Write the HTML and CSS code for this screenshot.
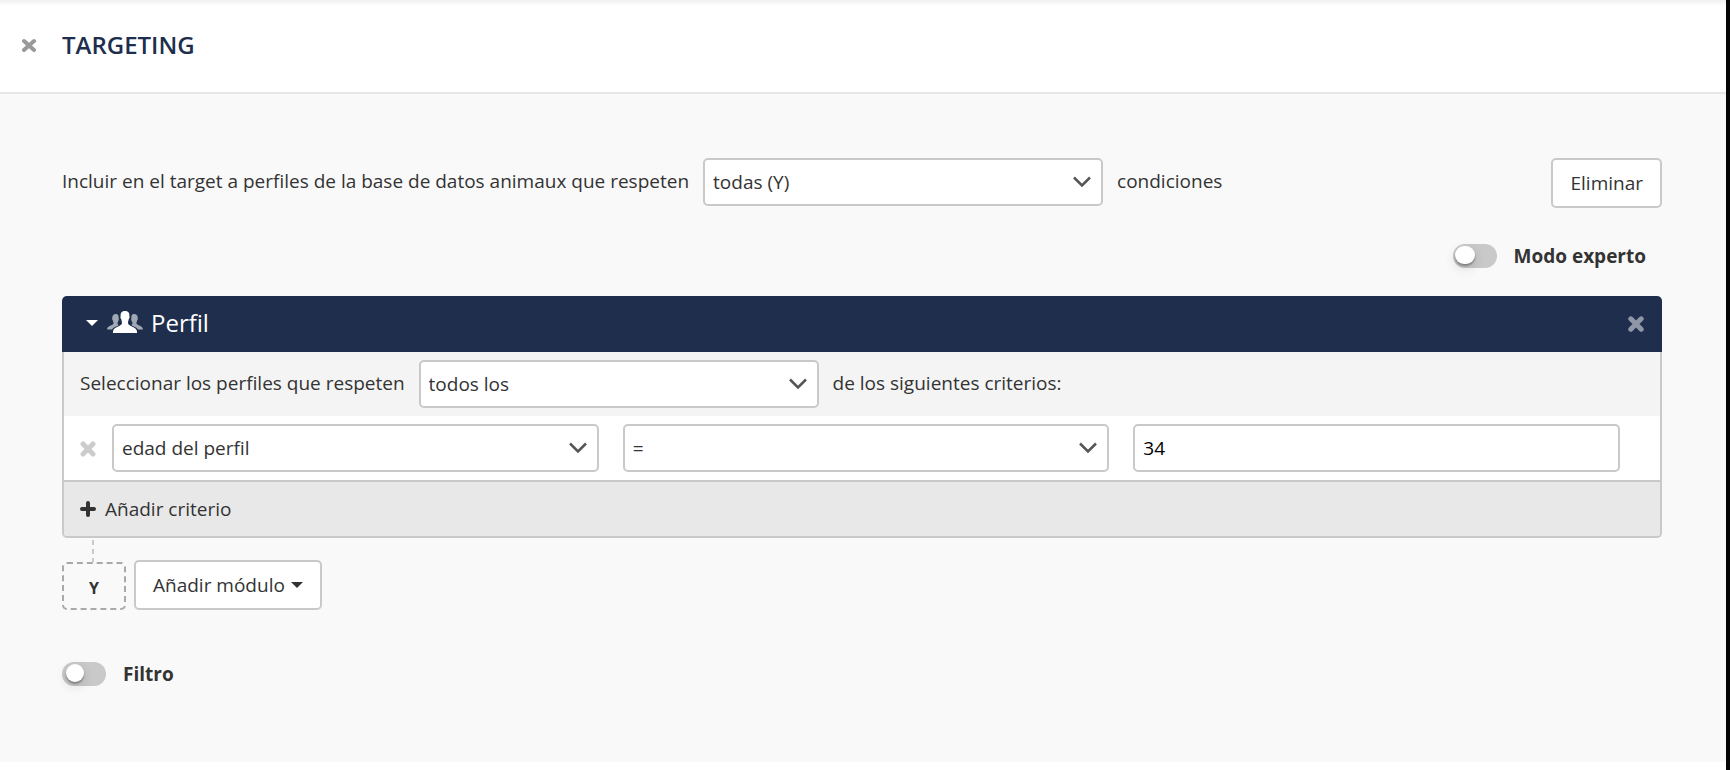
FILE: index.html
```html
<!DOCTYPE html>
<html lang="es">
<head>
<meta charset="utf-8">
<title>Targeting</title>
<link rel="stylesheet" href="styles.css">
</head>
<body>
<div class="page">
  <header class="topbar">
    <button class="icon-button close" type="button" aria-label="Cerrar">
      <svg width="16" height="14" viewBox="0 0 16 14"><path d="M3 3L13 12M13 3L3 12"/></svg>
    </button>
    <h1 class="title">TARGETING</h1>
  </header>
  <main class="content">
    <div class="target-row">
      <div class="sentence">
        <label for="match">Incluir en el target a perfiles de la base de datos animaux que respeten</label>
        <select class="field select-inline" id="match"><option>todas (Y)</option></select>
        <span>condiciones</span>
      </div>
      <button class="button" type="button">Eliminar</button>
    </div>
    <label class="switch expert"><input class="toggle wide" type="checkbox"><span>Modo experto</span></label>

    <section class="panel">
      <div class="panel-head">
        <button class="collapse" type="button" aria-expanded="true">
          <svg class="caret" width="12" height="6" viewBox="0 0 12 6"><path d="M0 0H12L6 6Z"/></svg>
          <svg class="users" width="36" height="24" viewBox="0 0 36 24">
            <g fill="#a0a7b5">
              <path d="M9 3C6.300 3 5.100 4.800 5.300 7C4.900 7.500 5.300 9 5.900 9.500C6.200 11 6.600 11.500 6.600 12.300C6.600 14 1 15 0.200 17.300V18.500H5C6.300 16.200 9.500 15.600 11.600 14.300C10.800 13.400 10.400 12.800 10.500 11.800C11 11 11.300 10.500 11.500 9.500C12 9 11.900 8 11.600 7C11.800 4.800 11.200 3 9 3Z"/>
              <path d="M9 3C6.300 3 5.100 4.800 5.300 7C4.900 7.500 5.300 9 5.900 9.500C6.200 11 6.600 11.500 6.600 12.300C6.600 14 1 15 0.200 17.300V18.500H5C6.300 16.200 9.500 15.600 11.600 14.300C10.800 13.400 10.400 12.800 10.500 11.800C11 11 11.300 10.500 11.500 9.500C12 9 11.900 8 11.600 7C11.800 4.800 11.200 3 9 3Z" transform="translate(36 0) scale(-1 1)"/>
            </g>
            <path d="M18 0C14.500 0 13.300 2.200 13.700 5C13 5.600 13.600 7.700 14.300 8.300C14.600 10 15 10.800 15 12C15 15.500 6.500 15.500 6 20.500V22H30V20.500C29.500 15.500 21 15.500 21 12C21 10.800 21.400 10 21.700 8.300C22.400 7.700 23 5.600 22.300 5C22.700 2.200 21.500 0 18 0Z" fill="#fff"/>
          </svg>
          <span>Perfil</span>
        </button>
        <button class="icon-button remove-module" type="button" aria-label="Eliminar módulo">
          <svg width="16" height="16" viewBox="0 0 16 16"><path d="M2.800 2.800L13.200 13.200M13.200 2.800L2.800 13.200"/></svg>
        </button>
      </div>
      <div class="panel-row sentence">
        <label for="criteria">Seleccionar los perfiles que respeten</label>
        <select class="field select-inline" id="criteria"><option>todos los</option></select>
        <span>de los siguientes criterios:</span>
      </div>
      <div class="panel-row criterion">
        <button class="icon-button remove-criterion" type="button" aria-label="Eliminar criterio">
          <svg width="16" height="16" viewBox="0 0 16 16"><path d="M3 3L13 13M13 3L3 13"/></svg>
        </button>
        <select class="field" aria-label="Campo"><option>edad del perfil</option></select>
        <select class="field" aria-label="Operador"><option>=</option></select>
        <input class="field" type="text" value="34" aria-label="Valor">
      </div>
      <button class="add-criterion" type="button">
        <svg width="16" height="16" viewBox="0 0 16 16"><path d="M8 2V14M2 8H14"/></svg>
        <span>Añadir criterio</span>
      </button>
    </section>

    <div class="connector"></div>
    <div class="module-row">
      <div class="operator">Y</div>
      <button class="button" type="button">Añadir módulo
        <svg width="12" height="6" viewBox="0 0 12 6" fill="#333"><path d="M0 0H12L6 6Z"/></svg>
      </button>
    </div>
    <label class="switch filter"><input class="toggle" type="checkbox"><span>Filtro</span></label>
  </main>
</div>
</body>
</html>
```
FILE: styles.css
```css
* { box-sizing: border-box; }

body {
  margin: 0;
  background: #fff;
  color: #333;
  font: 19px/28px "Open Sans", sans-serif;
}

button, select, input { font: inherit; color: inherit; margin: 0; }
button { cursor: pointer; }
svg { display: block; flex: none; }

.page {
  min-height: 100vh;
  border-right: 4px solid #050505;
  padding-bottom: 8px;
  display: flex;
  flex-direction: column;
}

.topbar {
  height: 94px;
  padding: 0 20px 2px;
  display: flex;
  align-items: center;
  gap: 24px;
  border-bottom: 2px solid #e7e7e7;
  background: linear-gradient(#f0f0f0, #fff 6px);
}

.title { margin: 0; font-size: 24px; line-height: 32px; font-weight: 600; color: #202e4e; }

.icon-button {
  display: flex;
  padding: 0;
  border: 0;
  background: none;
  fill: none;
  stroke-linecap: round;
}
.close { width: 18px; justify-content: center; stroke: #999; stroke-width: 4px; }
.remove-module { stroke: #9097a7; stroke-width: 5px; }
.remove-criterion { stroke: #ccc; stroke-width: 5px; }

.content { flex: 1; padding: 64px 64px 0 62px; background: #f9f9f9; }

.target-row { display: flex; justify-content: space-between; align-items: flex-start; }
.sentence { display: flex; align-items: center; gap: 14px; }
.sentence > label, .sentence > span { padding-bottom: 2px; white-space: nowrap; }

.field {
  height: 48px;
  min-width: 0;
  padding: 0 8px;
  border: 2px solid #c9c9c9;
  border-radius: 5px;
  background: #fff;
}
select.field {
  appearance: none;
  padding-right: 40px;
  background: #fff url("data:image/svg+xml,%3Csvg xmlns='http://www.w3.org/2000/svg' width='18' height='12' fill='none' stroke='%23555' stroke-width='2.500'%3E%3Cpath d='M1 1.500L9 9.500L17 1.500'/%3E%3C/svg%3E") no-repeat right 10px center;
}
input.field { color: #000; }
.select-inline { width: 400px; }

.button {
  display: flex;
  align-items: center;
  gap: 6px;
  height: 50px;
  padding: 0 17px;
  border: 2px solid #c9c9c9;
  border-radius: 5px;
  background: #fff;
}

.switch { display: flex; align-items: center; gap: 17px; font-weight: 700; }
.expert { width: max-content; margin: 34px 16px 0 auto; }
.filter { width: max-content; margin-top: 50px; }

.toggle {
  appearance: none;
  width: 44px;
  height: 24px;
  padding: 2px 4px 4px;
  border-radius: 12px;
  background: #c9c9c9;
}
.toggle::before {
  content: "";
  display: block;
  width: 18px;
  height: 18px;
  border-radius: 9px;
  background: #fff;
  box-shadow: 0 2px 2px rgba(0, 0, 0, .3), 0 4px 12px rgba(0, 0, 0, .15);
}
.toggle.wide { padding-left: 2px; }
.toggle.wide::before { width: 20px; }
.toggle:checked { background: #202e4e; }

.panel {
  margin-top: 26px;
  border: 2px solid #c9c9c9;
  border-top: 0;
  border-radius: 5px;
}
.panel-head {
  height: 56px;
  margin: 0 -2px;
  padding: 0 18px 0 24px;
  display: flex;
  align-items: center;
  justify-content: space-between;
  border-radius: 5px 5px 0 0;
  background: #202e4e;
}
.collapse {
  display: flex;
  align-items: center;
  padding: 0 0 2px;
  border: 0;
  background: none;
  color: #fff;
  font-size: 24px;
  line-height: 32px;
}
.collapse .caret { margin-right: 9px; fill: #fff; }
.collapse .users { margin-right: 8px; }

.panel-row { min-height: 64px; padding: 8px 16px; background: #f4f4f4; }
.panel-row.criterion {
  display: grid;
  grid-template-columns: 8px repeat(3, minmax(0, 1fr));
  align-items: center;
  gap: 24px;
  padding-right: 40px;
  background: #fff;
}
.criterion .remove-criterion { width: 16px; padding-top: 2px; }

.add-criterion {
  width: 100%;
  height: 56px;
  padding: 0 16px;
  display: flex;
  align-items: center;
  gap: 9px;
  border: 0;
  border-top: 2px solid #c9c9c9;
  border-radius: 0 0 3px 3px;
  background: #e8e8e8;
}
.add-criterion svg { stroke: #333; stroke-width: 4px; stroke-linecap: round; }

.connector { width: 2px; height: 22px; margin: 2px 0 -2px 30px; background: repeating-linear-gradient(#c9c9c9 0 5px, transparent 5px 9px); }

.module-row { display: flex; align-items: flex-end; gap: 8px; }
.operator {
  width: 64px;
  height: 48px;
  display: flex;
  align-items: center;
  justify-content: center;
  padding-top: 4px;
  border: 2px dashed #a9a9a9;
  border-radius: 5px;
  font-size: 16px;
  font-weight: 700;
}
```
